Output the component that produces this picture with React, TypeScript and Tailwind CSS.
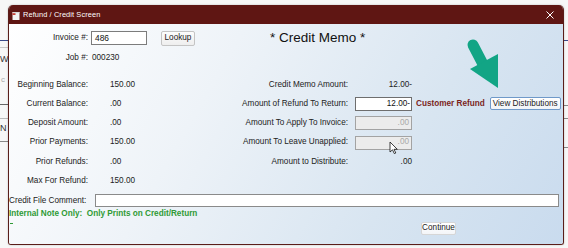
import React from "react";

const font = { fontFamily: '"Liberation Sans", Arial, sans-serif' };

function LeftRow({
  label,
  value,
  right,
}: {
  label: string;
  value: string;
  right?: React.ReactNode;
}) {
  return (
    <div className="flex items-center h-[19.3px]">
      <div className="w-[79px] text-right text-[8.2px] text-[#222] whitespace-nowrap">{label}</div>
      <div className="ml-[22px] w-[90px] text-[8.2px] text-[#222]">{value}</div>
      {right}
    </div>
  );
}

function RightLabel({ children }: { children: React.ReactNode }) {
  return <div className="w-[148px] text-right text-[8.2px] text-[#222] whitespace-nowrap">{children}</div>;
}

export default function App() {
  return (
    <div className="relative w-[568px] h-[248px] bg-[#f7f7f7] overflow-hidden" style={font}>
      {/* background window strips */}
      <div className="absolute left-0 top-[40px] w-[8px] h-[1px] bg-[#3b4a8a]" />
      <div className="absolute left-0 top-[47px] w-[8px] h-[1px] bg-[#c8c8c8]" />
      <div className="absolute left-0 top-[55px] text-[9px] text-[#333] leading-none">W</div>
      <div className="absolute left-[1px] top-[76px] text-[8px] text-[#aaa] leading-none">c</div>
      <div className="absolute left-0 top-[104px] w-[8px] h-[1px] bg-[#666]" />
      <div className="absolute left-0 top-[118px] w-[8px] h-[1px] bg-[#bbb]" />
      <div className="absolute left-0 top-[124px] text-[9px] text-[#333] leading-none">N</div>
      <div className="absolute left-0 top-[141px] w-[8px] h-[1px] bg-[#888]" />
      <div className="absolute left-[564px] top-[40px] w-[4px] h-[1px] bg-[#3b4a8a]" />
      <div className="absolute left-[564px] top-[105px] w-[4px] h-[1px] bg-[#888]" />
      <div className="absolute left-[564px] top-[118px] w-[4px] h-[1px] bg-[#888]" />
      <div className="absolute left-[564px] top-[147px] w-[4px] h-[1px] bg-[#888]" />

      {/* dialog */}
      <div className="absolute left-[8px] top-[5px] w-[556px] h-[240px] flex flex-col rounded-t-[5px] rounded-b-[3px] overflow-hidden border-x border-b border-[#5a1d19] shadow-[0_0_2px_rgba(0,0,0,0.25)]">
        {/* title bar */}
        <div className="h-[19px] bg-[#5f1613] flex items-center pl-[3px] pr-[8px] shrink-0">
          <svg width="8" height="9" viewBox="0 0 8 9" className="mt-[1px]">
            <rect x="0.5" y="1" width="7" height="8" fill="#f4f4f4" />
            <rect x="0.5" y="1" width="3" height="3" fill="#c9433a" />
            <rect x="0.5" y="1" width="7" height="1.2" fill="#d9d9d9" />
          </svg>
          <span className="ml-[3px] text-[7.4px] text-white tracking-[0.1px]">Refund / Credit Screen</span>
          <svg width="8" height="8" viewBox="0 0 8 8" className="ml-auto mr-[1px]">
            <path d="M0.5 0.5 L7.5 7.5 M7.5 0.5 L0.5 7.5" stroke="#ffffff" strokeWidth="1" />
          </svg>
        </div>

        {/* body */}
        <div className="relative flex-1 flex flex-col bg-[linear-gradient(120deg,#ffffff_0%,#eef3f8_35%,#d8e5f1_70%,#c9dbee_100%)]">
          {/* invoice row */}
          <div className="flex items-center h-[16px] mt-[6px]">
            <div className="w-[79px] text-right text-[8.2px] text-[#222]">Invoice #:</div>
            <div className="ml-[3px] w-[56px] h-[14px] bg-white border border-[#7c7c7c] flex items-center pl-[3px] text-[8.4px] text-[#111]">
              486
            </div>
            <div className="ml-[14px] w-[34px] h-[15px] bg-[linear-gradient(#fdfdfd,#eeeeee)] border border-[#c4c4c4] rounded-[2px] flex items-center justify-center text-[8.2px] text-[#222]">
              Lookup
            </div>
            <div className="ml-[75px] text-[13.5px] text-[#111] whitespace-nowrap">* Credit Memo *</div>
          </div>

          {/* job row */}
          <div className="flex items-center h-[16px] mt-[4px]">
            <div className="w-[79px] text-right text-[8.2px] text-[#222]">Job #:</div>
            <div className="ml-[4px] text-[8.2px] text-[#222]">000230</div>
          </div>

          {/* main grid */}
          <div className="flex flex-col mt-[9px]">
            <LeftRow
              label="Beginning Balance:"
              value="150.00"
              right={
                <>
                  <RightLabel>Credit Memo Amount:</RightLabel>
                  <div className="ml-[7px] w-[57px] text-right text-[8.2px] text-[#222]">12.00-</div>
                </>
              }
            />
            <LeftRow
              label="Current Balance:"
              value=".00"
              right={
                <>
                  <RightLabel>Amount of Refund To Return:</RightLabel>
                  <div className="ml-[7px] w-[57px] h-[14px] bg-white border border-[#6e6e6e] flex items-center justify-end pr-[1px] text-[8.2px] text-[#111]">
                    12.00-
                  </div>
                  <div className="ml-[4px] text-[8.2px] font-bold text-[#7a1f1c] whitespace-nowrap">Customer Refund</div>
                  <div className="ml-[5px] w-[71px] h-[13px] bg-[linear-gradient(#ffffff,#f1f4f8)] border border-[#6f99c9] rounded-[2px] flex items-center justify-center text-[8.2px] text-[#222] whitespace-nowrap">
                    View Distributions
                  </div>
                </>
              }
            />
            <LeftRow
              label="Deposit Amount:"
              value=".00"
              right={
                <>
                  <RightLabel>Amount To Apply To Invoice:</RightLabel>
                  <div className="ml-[7px] w-[57px] h-[14px] bg-[#ececec] border border-[#a3a3a3] flex items-center justify-end pr-[2px] text-[8.2px] text-[#a9a9a9]">
                    .00
                  </div>
                </>
              }
            />
            <LeftRow
              label="Prior Payments:"
              value="150.00"
              right={
                <>
                  <RightLabel>Amount To Leave Unapplied:</RightLabel>
                  <div className="ml-[7px] w-[57px] h-[14px] bg-[#ececec] border border-[#a3a3a3] flex items-center justify-end pr-[2px] text-[8.2px] text-[#a9a9a9]">
                    .00
                  </div>
                </>
              }
            />
            <LeftRow
              label="Prior Refunds:"
              value=".00"
              right={
                <>
                  <RightLabel>Amount to Distribute:</RightLabel>
                  <div className="ml-[7px] w-[57px] text-right text-[8.2px] text-[#222]">.00</div>
                </>
              }
            />
            <LeftRow label="Max For Refund:" value="150.00" />
          </div>

          {/* comment row */}
          <div className="flex items-center h-[14px] mt-[3px]">
            <div className="w-[86px] text-[8.2px] text-[#222] whitespace-nowrap">Credit File Comment:</div>
            <div className="w-[464px] h-[13px] bg-white border border-[#8a8a8a]" />
          </div>

          <div className="flex items-center h-[10px] mt-[1px]">
            <div className="text-[8.2px] font-bold text-[#2f9a35] whitespace-pre">
              {"Internal Note Only:  Only Prints on Credit/Return"}
            </div>
          </div>

          <div className="flex items-start mt-[3px] h-[13px]">
            <div className="mt-[1px] ml-[1px] w-[3px] h-[1px] bg-[#2f9a35]" />
            <div className="ml-[408px] w-[35px] h-[13px] bg-[linear-gradient(#ffffff,#f3f5f8)] border border-[#d6d6d6] rounded-[2px] flex items-center justify-center text-[8.2px] text-[#222]">
              Continue
            </div>
          </div>
        </div>
      </div>

      {/* green arrow annotation */}
      <svg className="absolute left-[462px] top-[34px]" width="42" height="58" viewBox="0 0 42 58">
        <line x1="11" y1="11" x2="24" y2="36" stroke="#12a585" strokeWidth="11" strokeLinecap="round" />
        <polygon points="8,35 36,20 36,54" fill="#12a585" />
      </svg>

      {/* mouse cursor */}
      <svg className="absolute left-[389px] top-[141px]" width="10" height="14" viewBox="0 0 10 14">
        <path d="M1 1 L1 11 L3.5 8.8 L5.3 12.6 L6.8 12 L5 8.3 L8.3 8.3 Z" fill="#ffffff" stroke="#111" strokeWidth="0.8" strokeLinejoin="round" />
      </svg>
    </div>
  );
}
